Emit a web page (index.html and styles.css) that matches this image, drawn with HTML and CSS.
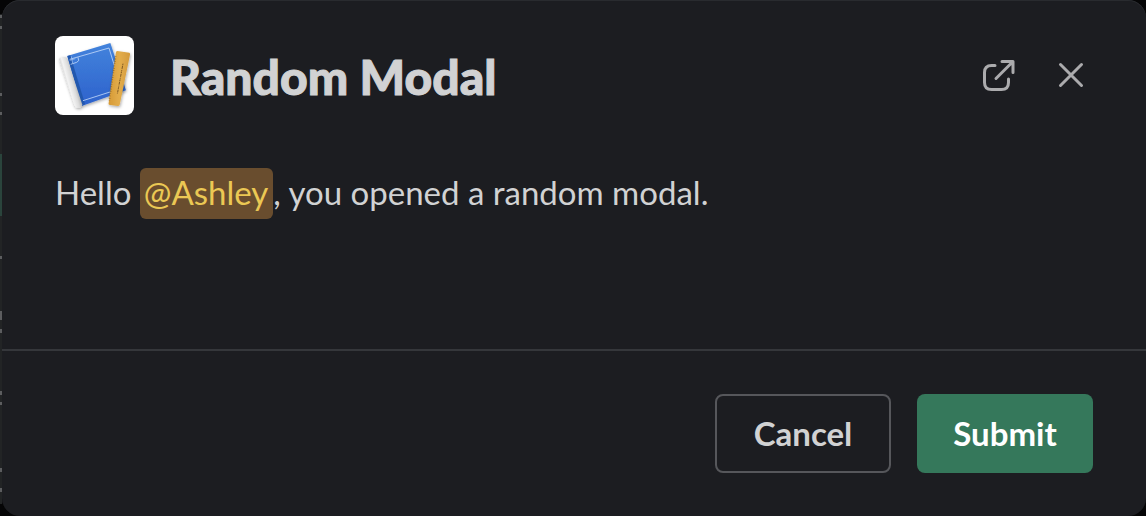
FILE: index.html
```html
<!DOCTYPE html>
<html lang="en">
<head>
<meta charset="utf-8">
<meta name="viewport" content="width=device-width, initial-scale=1">
<title>Random Modal</title>
<link rel="stylesheet" href="styles.css">
</head>
<body>
<main class="backdrop">
  <section class="modal" role="dialog" aria-labelledby="modal-title">
    <header class="modal-header">
      <svg class="app-icon" viewBox="30 30 237 237" aria-hidden="true">
        <defs>
          <linearGradient id="cover" x1="0" y1="0" x2="0" y2="1">
            <stop offset="0" stop-color="#4383dc"/>
            <stop offset="1" stop-color="#2d62cc"/>
          </linearGradient>
          <linearGradient id="roll" gradientUnits="userSpaceOnUse" x1="58" y1="170" x2="94" y2="160">
            <stop offset="0" stop-color="#c9c9c9"/>
            <stop offset="0.3" stop-color="#f3f3f3"/>
            <stop offset="0.65" stop-color="#dcdcdc"/>
            <stop offset="1" stop-color="#a9a9a9"/>
          </linearGradient>
          <linearGradient id="wood" x1="0" y1="0" x2="1" y2="0">
            <stop offset="0" stop-color="#d69a36"/>
            <stop offset="0.5" stop-color="#e3ad4c"/>
            <stop offset="1" stop-color="#d49a3c"/>
          </linearGradient>
          <filter id="shade" x="-20%" y="-20%" width="140%" height="140%">
            <feDropShadow dx="2" dy="4" stdDeviation="4" flood-color="#000" flood-opacity="0.35"/>
          </filter>
        </defs>
        <rect x="30" y="30" width="237" height="237" rx="24" fill="#fff"/>
        <g filter="url(#shade)">
          <path d="M67 90 196 51 243 193 110 240Z" fill="url(#cover)"/>
          <path d="M67 90 76 88 120 234 110 240Z" fill="#2458ae"/>
          <path d="M42 99Q44 94 51 93L61 93Q65 93 67 99L112 236 110 242Q104 247 94 245Q90 242 88 237Z" fill="url(#roll)"/>
        </g>
        <path d="M74 100 192 66 229 187 114 224M77 115 95 109 101 104 99 94" fill="none" stroke="#c6dcfa" stroke-width="2.4"/>
        <path d="M79 91 83 112M74 103 91 98" fill="none" stroke="#a9c8f4" stroke-width="2"/>
        <g filter="url(#shade)">
          <path d="M217 75 253 80Q256 82 255 86L224 237Q222 241 218 240L192 236Q190 234 191 231L213 79Q214 75 217 75Z" fill="url(#wood)"/>
        </g>
        <path d="M212 91 193 223" stroke="#946722" stroke-width="5" stroke-dasharray="2 5"/>
        <path d="M234 113 217 204" stroke="#805a24" stroke-width="3" stroke-dasharray="5 2 9 3 3 2"/>
      </svg>
      <h1 class="modal-title" id="modal-title">Random Modal</h1>
      <div class="header-actions">
        <button class="icon-button" type="button" aria-label="Open in new window">
          <svg viewBox="0 0 44 44" aria-hidden="true">
            <path d="M17 11.5H13.500Q6.500 11.500 6.500 18.500V28.500Q6.500 35.500 13.500 35.500H23.500Q30.500 35.500 30.500 28.500V25M18 24.500 34.500 8M24 7.500H35V18.500"/>
          </svg>
        </button>
        <button class="icon-button" type="button" aria-label="Close">
          <svg viewBox="0 0 44 44" aria-hidden="true">
            <path d="M11.500 10.500 32.500 31.500M32.500 10.500 11.500 31.500"/>
          </svg>
        </button>
      </div>
    </header>
    <div class="modal-body">
      <p class="message">Hello <a class="mention" href="#ashley">@Ashley</a>, you opened a random modal.</p>
    </div>
    <footer class="modal-footer">
      <button class="button button-outline" type="button">Cancel</button>
      <button class="button button-primary" type="submit">Submit</button>
    </footer>
  </section>
</main>
</body>
</html>
```
FILE: styles.css
```css
* {
  box-sizing: border-box;
}

body {
  margin: 0;
  background: #050506;
  color: #d1d2d3;
  font-family: Lato, "Noto Sans", sans-serif;
}

.backdrop {
  display: flex;
  min-height: 100vh;
  padding-left: 2px;
  background:
    linear-gradient(#2a443c, #2a443c) 0 154px / 2px 62px no-repeat,
    linear-gradient(#5c5d5f, #5c5d5f) 0 15px / 2px 3px no-repeat,
    linear-gradient(#5c5d5f, #5c5d5f) 0 26px / 2px 3px no-repeat,
    linear-gradient(#5c5d5f, #5c5d5f) 0 93px / 2px 3px no-repeat,
    linear-gradient(#5c5d5f, #5c5d5f) 0 112px / 2px 3px no-repeat,
    linear-gradient(#5c5d5f, #5c5d5f) 0 256px / 2px 3px no-repeat,
    linear-gradient(#5c5d5f, #5c5d5f) 0 311px / 2px 9px no-repeat,
    linear-gradient(#5c5d5f, #5c5d5f) 0 329px / 2px 4px no-repeat,
    linear-gradient(#5c5d5f, #5c5d5f) 0 391px / 2px 4px no-repeat,
    linear-gradient(#5c5d5f, #5c5d5f) 0 402px / 2px 3px no-repeat,
    linear-gradient(#5c5d5f, #5c5d5f) 0 468px / 2px 4px no-repeat,
    linear-gradient(#5c5d5f, #5c5d5f) 0 488px / 2px 4px no-repeat,
    linear-gradient(#222425, #222425) 0 14px / 2px 490px no-repeat;
}

.modal {
  display: flex;
  flex: 1;
  flex-direction: column;
  border-radius: 18px;
  background: #1c1d21;
  box-shadow: inset 0 1px 0 #292b2f;
}

.modal-header {
  display: flex;
  align-items: center;
  padding: 36px 53px 0;
}

.app-icon {
  flex: none;
  width: 79px;
  height: 79px;
}

.modal-title {
  flex: 1;
  margin: 2px 0 0 36px;
  font-size: 48px;
  font-weight: 900;
  line-height: 60px;
  -webkit-text-stroke: 1px currentColor;
}

.header-actions {
  display: flex;
  gap: 27px;
}

.icon-button {
  width: 44px;
  height: 44px;
  padding: 0;
  border: 0;
  background: none;
  color: #ababad;
  cursor: pointer;
}

.icon-button svg {
  display: block;
  fill: none;
  stroke: currentColor;
  stroke-width: 3;
  stroke-linecap: round;
  stroke-linejoin: round;
}

.modal-body {
  flex: 1;
  padding: 53px 53px 36px;
}

.message {
  margin: 0;
  font-size: 33px;
  line-height: 48px;
}

.mention {
  padding: 4px 5px 7px 4px;
  border-radius: 6px;
  background: #694d2e;
  color: #ebc854;
  text-decoration: none;
}

.modal-footer {
  display: flex;
  justify-content: flex-end;
  gap: 26px;
  padding: 43px 53px;
  border-top: 2px solid #35373b;
}

.button {
  min-width: 176px;
  height: 79px;
  padding: 0 35px 2px;
  border: 0;
  border-radius: 8px;
  font-family: inherit;
  font-size: 33px;
  font-weight: 700;
  cursor: pointer;
}

.button-outline {
  border: 2px solid #56575b;
  background: transparent;
  color: #d1d2d3;
}

.button-primary {
  background: #35785b;
  color: #fff;
}
```
